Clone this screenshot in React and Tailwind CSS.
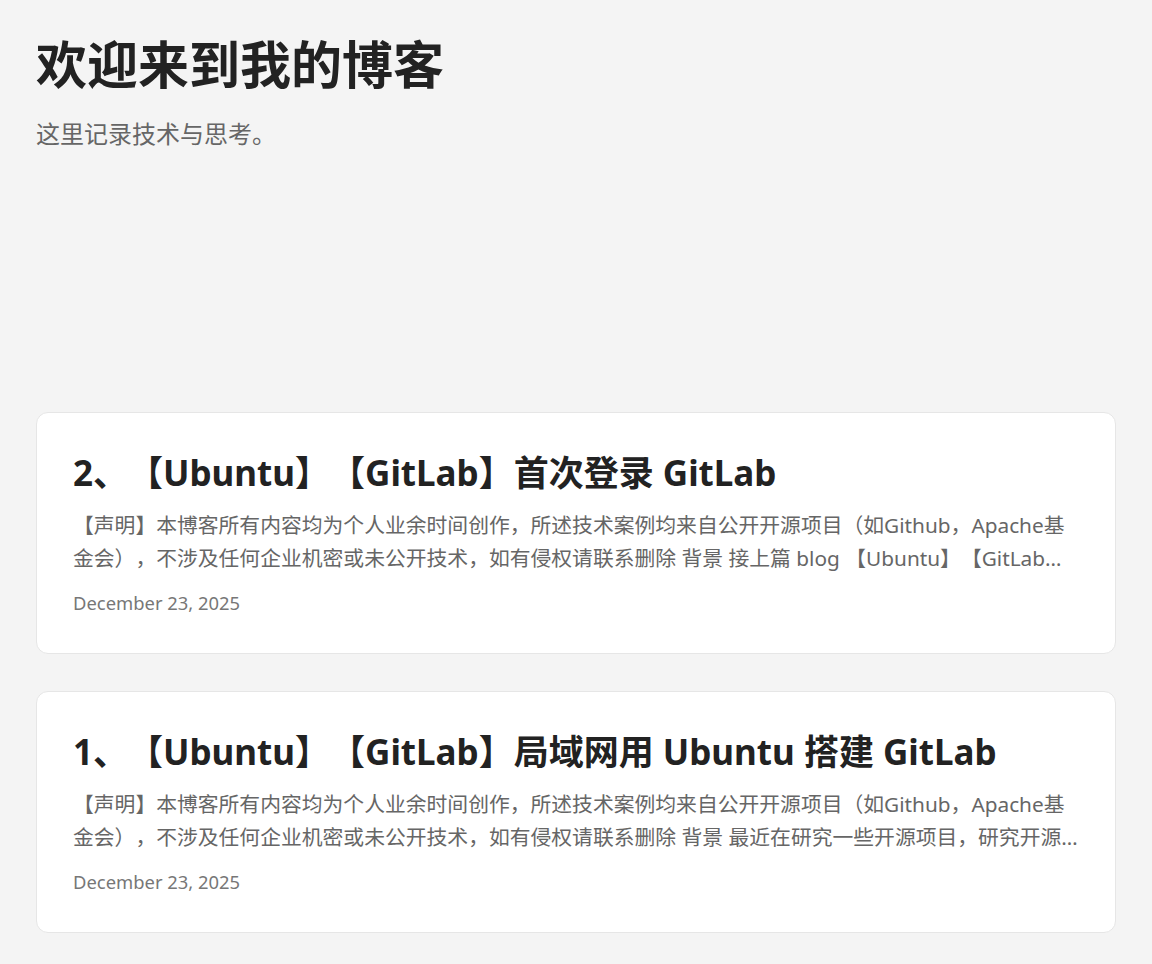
export default function App() {
  const font = { fontFamily: '"Noto Sans", "Noto Sans CJK SC", sans-serif' };
  const posts = [
    {
      title: "2、【Ubuntu】【GitLab】首次登录 GitLab",
      excerpt:
        "【声明】本博客所有内容均为个人业余时间创作，所述技术案例均来自公开开源项目（如Github，Apache基金会），不涉及任何企业机密或未公开技术，如有侵权请联系删除 背景 接上篇 blog 【Ubuntu】【GitLab】局域网用 Ubuntu 搭建 GitLab 的文章，本篇继续介绍首次登录",
      date: "December 23, 2025",
    },
    {
      title: "1、【Ubuntu】【GitLab】局域网用 Ubuntu 搭建 GitLab",
      excerpt:
        "【声明】本博客所有内容均为个人业余时间创作，所述技术案例均来自公开开源项目（如Github，Apache基金会），不涉及任何企业机密或未公开技术，如有侵权请联系删除 背景 最近在研究一些开源项目，研究开源项目的过程中需要一个代码托管平台",
      date: "December 23, 2025",
    },
  ];
  return (
    <div
      className="min-h-[964px] bg-[#f4f4f4] px-9 pt-[34px] pb-[30px] [text-spacing-trim:space-all]"
      style={font}
    >
      <header>
        <h1 className="text-[51px] leading-[61px] font-bold text-[#222222]">
          欢迎来到我的博客
        </h1>
        <p className="mt-[21px] text-[24px] leading-[36px] text-[#666666]">
          这里记录技术与思考。
        </p>
      </header>
      <main className="mt-[260px] flex flex-col gap-[37px]">
        {posts.map((p) => (
          <article
            key={p.title}
            className="rounded-xl border border-[#e6e6e6] bg-white px-9 pt-[37px] pb-[37px]"
          >
            <h2 className="text-[35px] leading-[46px] font-bold text-[#222222]">
              {p.title}
            </h2>
            <p className="mt-[12.5px] text-[20.8px] leading-[33px] text-[#666666] line-clamp-2">
              {p.excerpt}
            </p>
            <div className="mt-[15.5px] text-[18.4px] leading-[26px] text-[#777777]">
              {p.date}
            </div>
          </article>
        ))}
      </main>
    </div>
  );
}
